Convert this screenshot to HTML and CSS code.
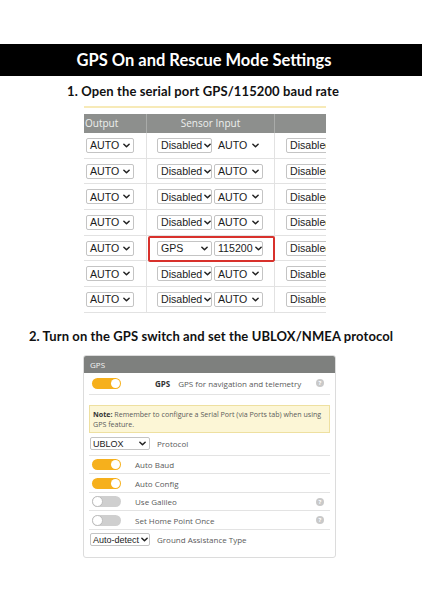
FILE: index.html
```html
<!DOCTYPE html>
<html>
<head>
<meta charset="utf-8">
<link rel="stylesheet" href="styles.css">
</head>
<body>
<div class="banner">GPS On and Rescue Mode Settings</div>
<h2 class="step step1">1. Open the serial port GPS/115200 baud rate</h2>

<div class="ports">
  <div class="ports-head">
    <div class="hc c1">Output</div>
    <div class="hc c2">Sensor Input</div>
    <div class="hc c3"></div>
  </div>
  <div class="prow">
    <div class="cell c1"><span class="sel w47">AUTO<svg class="chev" viewBox="0 0 8 5"><path d="M1 1l3 3 3-3"/></svg></span></div>
    <div class="cell c2"><span class="sel w55">Disabled<svg class="chev" viewBox="0 0 8 5"><path d="M1 1l3 3 3-3"/></svg></span><span class="sel w49 plain">AUTO<svg class="chev" viewBox="0 0 8 5"><path d="M1 1l3 3 3-3"/></svg></span></div>
    <div class="cell c3"><span class="sel w60">Disabled</span></div>
  </div>
  <div class="prow">
    <div class="cell c1"><span class="sel w47">AUTO<svg class="chev" viewBox="0 0 8 5"><path d="M1 1l3 3 3-3"/></svg></span></div>
    <div class="cell c2"><span class="sel w55">Disabled<svg class="chev" viewBox="0 0 8 5"><path d="M1 1l3 3 3-3"/></svg></span><span class="sel w49">AUTO<svg class="chev" viewBox="0 0 8 5"><path d="M1 1l3 3 3-3"/></svg></span></div>
    <div class="cell c3"><span class="sel w60">Disabled</span></div>
  </div>
  <div class="prow">
    <div class="cell c1"><span class="sel w47">AUTO<svg class="chev" viewBox="0 0 8 5"><path d="M1 1l3 3 3-3"/></svg></span></div>
    <div class="cell c2"><span class="sel w55">Disabled<svg class="chev" viewBox="0 0 8 5"><path d="M1 1l3 3 3-3"/></svg></span><span class="sel w49">AUTO<svg class="chev" viewBox="0 0 8 5"><path d="M1 1l3 3 3-3"/></svg></span></div>
    <div class="cell c3"><span class="sel w60">Disabled</span></div>
  </div>
  <div class="prow">
    <div class="cell c1"><span class="sel w47">AUTO<svg class="chev" viewBox="0 0 8 5"><path d="M1 1l3 3 3-3"/></svg></span></div>
    <div class="cell c2"><span class="sel w55">Disabled<svg class="chev" viewBox="0 0 8 5"><path d="M1 1l3 3 3-3"/></svg></span><span class="sel w49">AUTO<svg class="chev" viewBox="0 0 8 5"><path d="M1 1l3 3 3-3"/></svg></span></div>
    <div class="cell c3"><span class="sel w60">Disabled</span></div>
  </div>
  <div class="prow">
    <div class="cell c1"><span class="sel w47">AUTO<svg class="chev" viewBox="0 0 8 5"><path d="M1 1l3 3 3-3"/></svg></span></div>
    <div class="cell c2 marked"><span class="sel w55">GPS<svg class="chev" viewBox="0 0 8 5"><path d="M1 1l3 3 3-3"/></svg></span><span class="sel w49">115200<svg class="chev" viewBox="0 0 8 5"><path d="M1 1l3 3 3-3"/></svg></span></div>
    <div class="cell c3"><span class="sel w60">Disabled</span></div>
  </div>
  <div class="prow">
    <div class="cell c1"><span class="sel w47">AUTO<svg class="chev" viewBox="0 0 8 5"><path d="M1 1l3 3 3-3"/></svg></span></div>
    <div class="cell c2"><span class="sel w55">Disabled<svg class="chev" viewBox="0 0 8 5"><path d="M1 1l3 3 3-3"/></svg></span><span class="sel w49">AUTO<svg class="chev" viewBox="0 0 8 5"><path d="M1 1l3 3 3-3"/></svg></span></div>
    <div class="cell c3"><span class="sel w60">Disabled</span></div>
  </div>
  <div class="prow">
    <div class="cell c1"><span class="sel w47">AUTO<svg class="chev" viewBox="0 0 8 5"><path d="M1 1l3 3 3-3"/></svg></span></div>
    <div class="cell c2"><span class="sel w55">Disabled<svg class="chev" viewBox="0 0 8 5"><path d="M1 1l3 3 3-3"/></svg></span><span class="sel w49">AUTO<svg class="chev" viewBox="0 0 8 5"><path d="M1 1l3 3 3-3"/></svg></span></div>
    <div class="cell c3"><span class="sel w60">Disabled</span></div>
  </div>
</div>

<h2 class="step step2">2. Turn on the GPS switch and set the UBLOX/NMEA protocol</h2>

<div class="panel">
  <div class="panel-head">GPS</div>
  <div class="panel-body">
    <div class="grow first">
      <span class="tog on"></span>
      <span class="gps-lbl">GPS</span>
      <span class="desc">GPS for navigation and telemetry</span>
      <span class="help">?</span>
    </div>
    <div class="note"><b>Note:</b> Remember to configure a Serial Port (via Ports tab) when using<br>GPS feature.</div>
    <div class="grow selrow">
      <span class="psel w59">UBLOX<svg class="chev" viewBox="0 0 8 5"><path d="M1 1l3 3 3-3"/></svg></span>
      <span class="lbl2">Protocol</span>
    </div>
    <div class="grow">
      <span class="tog on"></span><span class="lbl">Auto Baud</span>
    </div>
    <div class="grow">
      <span class="tog on"></span><span class="lbl">Auto Config</span>
    </div>
    <div class="grow">
      <span class="tog off"></span><span class="lbl">Use Galileo</span><span class="help">?</span>
    </div>
    <div class="grow">
      <span class="tog off"></span><span class="lbl">Set Home Point Once</span><span class="help">?</span>
    </div>
    <div class="grow last">
      <span class="psel w59">Auto-detect<svg class="chev" viewBox="0 0 8 5"><path d="M1 1l3 3 3-3"/></svg></span>
      <span class="lbl2">Ground Assistance Type</span>
    </div>
  </div>
</div>
</body>
</html>
```
FILE: styles.css
```css
html, body {
  margin: 0;
  padding: 0;
  background: #fff;
}
body {
  width: 424px;
  height: 600px;
  overflow: hidden;
  font-family: "Liberation Sans", Arial, sans-serif;
}
.banner {
  margin-top: 44px;
  width: 422px;
  height: 32px;
  background: #000;
  color: #fff;
  font-family: Lato, "Noto Sans", sans-serif;
  font-weight: 700;
  font-size: 16.5px;
  line-height: 33px;
  text-align: center;
  padding-right: 14px;
  box-sizing: border-box;
}
.step {
  margin: 0;
  font-family: Lato, "Noto Sans", sans-serif;
  font-weight: 700;
  color: #111;
  text-align: center;
  line-height: 16px;
  box-sizing: border-box;
  width: 424px;
}
.step1 {
  margin-top: 7px;
  font-size: 13px;
  letter-spacing: 0.12px;
  padding-right: 18px;
}
.step2 {
  margin-top: 15px;
  font-size: 13px;
  letter-spacing: 0.1px;
  padding-right: 2px;
}

/* Ports table */
.ports {
  margin-top: 7px;
  margin-left: 84px;
  width: 242px;
  border-top: 2px solid #f7eab8;
  padding-top: 6px;
  overflow: hidden;
}
.ports-head {
  display: flex;
  height: 19px;
  background: #8d8f8d;
}
.hc {
  color: #eef0ee;
  font-family: "Open Sans", sans-serif;
  font-size: 10px;
  line-height: 19px;
  box-sizing: border-box;
}
.c1 { width: 63px; flex: none; }
.c2 { width: 128px; flex: none; }
.c3 { flex: 1; min-width: 0; }
.hc.c1 { padding-left: 1px; border-right: 1px solid #a9aba9; }
.hc.c2 { text-align: center; border-right: 1px solid #a9aba9; }
.prow {
  display: flex;
  height: 25.7px;
  border-bottom: 1px solid #e2e2e2;
  box-sizing: border-box;
}
.cell {
  display: flex;
  align-items: center;
  box-sizing: border-box;
  position: relative;
}
.cell.c1 { padding-left: 2px; border-right: 1px solid #e2e2e2; }
.cell.c2 { padding-left: 10px; gap: 2px; border-right: 1px solid #e2e2e2; }
.cell.c3 { padding-left: 11px; overflow: hidden; }
.sel {
  display: inline-flex;
  align-items: center;
  justify-content: space-between;
  box-sizing: border-box;
  height: 15px;
  padding: 0 3px 0 3px;
  border: 1px solid #c4c4c4;
  border-radius: 2px;
  background: #fff;
  font-size: 10.6px;
  color: #1b1b1b;
  flex: none;
  white-space: nowrap;
  overflow: hidden;
}
.sel.plain { border-color: transparent; }
.w47 { width: 48px; }
.w55 { width: 55px; }
.w49 { width: 49px; }
.w60 { width: 60px; justify-content: flex-start; }
.chev {
  width: 7px;
  height: 5px;
  flex: none;
  margin-left: 2px;
}
.chev path {
  fill: none;
  stroke: #222;
  stroke-width: 1.7;
  stroke-linecap: round;
  stroke-linejoin: round;
}
.marked::after {
  content: "";
  position: absolute;
  left: 1px;
  right: -1px;
  top: 0px;
  bottom: -2px;
  border: 2px solid #d8312c;
  border-radius: 2px;
}

/* GPS panel */
.panel {
  margin-top: 11px;
  margin-left: 83px;
  width: 253px;
  border: 1px solid #dcdcdc;
  border-radius: 3px;
  box-sizing: border-box;
  overflow: hidden;
  font-family: "Open Sans", sans-serif;
  color: #5a5a5a;
}
.panel-head {
  height: 17px;
  background: #7e807e;
  color: #f4f4f4;
  font-size: 8px;
  line-height: 17px;
  padding-left: 6px;
}
.panel-body {
  padding: 0 5px 7px 5px;
}
.grow {
  display: flex;
  align-items: center;
  box-sizing: border-box;
  height: 18.5px;
  border-bottom: 1px solid #e3e3e3;
  font-size: 8px;
}
.grow.first { height: 22px; margin-bottom: 10px; }
.grow.selrow { height: 23px; margin-top: 0; }
.grow.last { border-bottom: none; height: 20px; }
.tog {
  position: relative;
  width: 29px;
  height: 11px;
  border-radius: 6px;
  margin-left: 3px;
  flex: none;
  box-sizing: border-box;
}
.tog.on { background: #f6b01c; }
.tog.off { background: #cfcfcf; }
.tog::after {
  content: "";
  position: absolute;
  top: 1px;
  width: 9px;
  height: 9px;
  border-radius: 50%;
  background: #fff;
  box-sizing: border-box;
}
.tog.on::after { right: 1px; }
.tog.off::after { border: 1px solid #bdbdbd; top: 0; width: 11px; height: 11px; left: 0; }
.gps-lbl {
  margin-left: 34px;
  font-weight: 700;
  color: #333;
}
.desc { margin-left: 8px; }
.lbl { margin-left: 14px; }
.help {
  margin-left: auto;
  margin-right: 6px;
  width: 8px;
  height: 8px;
  border-radius: 50%;
  background: #c9c9c9;
  color: #fff;
  font-size: 6px;
  font-weight: 700;
  line-height: 8px;
  text-align: center;
  flex: none;
}
.note {
  background: #fcf6d6;
  border: 1px solid #eee0a0;
  padding: 3px 2px 3px 3px;
  font-size: 7.1px;
  line-height: 10px;
  color: #5b5b5b;
  white-space: nowrap;
  overflow: hidden;
}
.note b { color: #333; }
.psel {
  display: inline-flex;
  align-items: center;
  justify-content: space-between;
  box-sizing: border-box;
  height: 13px;
  padding: 0 3px 0 2px;
  margin-left: 1px;
  border: 1px solid #c4c4c4;
  border-radius: 2px;
  font-family: "Liberation Sans", Arial, sans-serif;
  font-size: 9px;
  color: #1b1b1b;
  flex: none;
  white-space: nowrap;
}
.w59 { width: 60px; }
.lbl2 { margin-left: 7px; }
```
